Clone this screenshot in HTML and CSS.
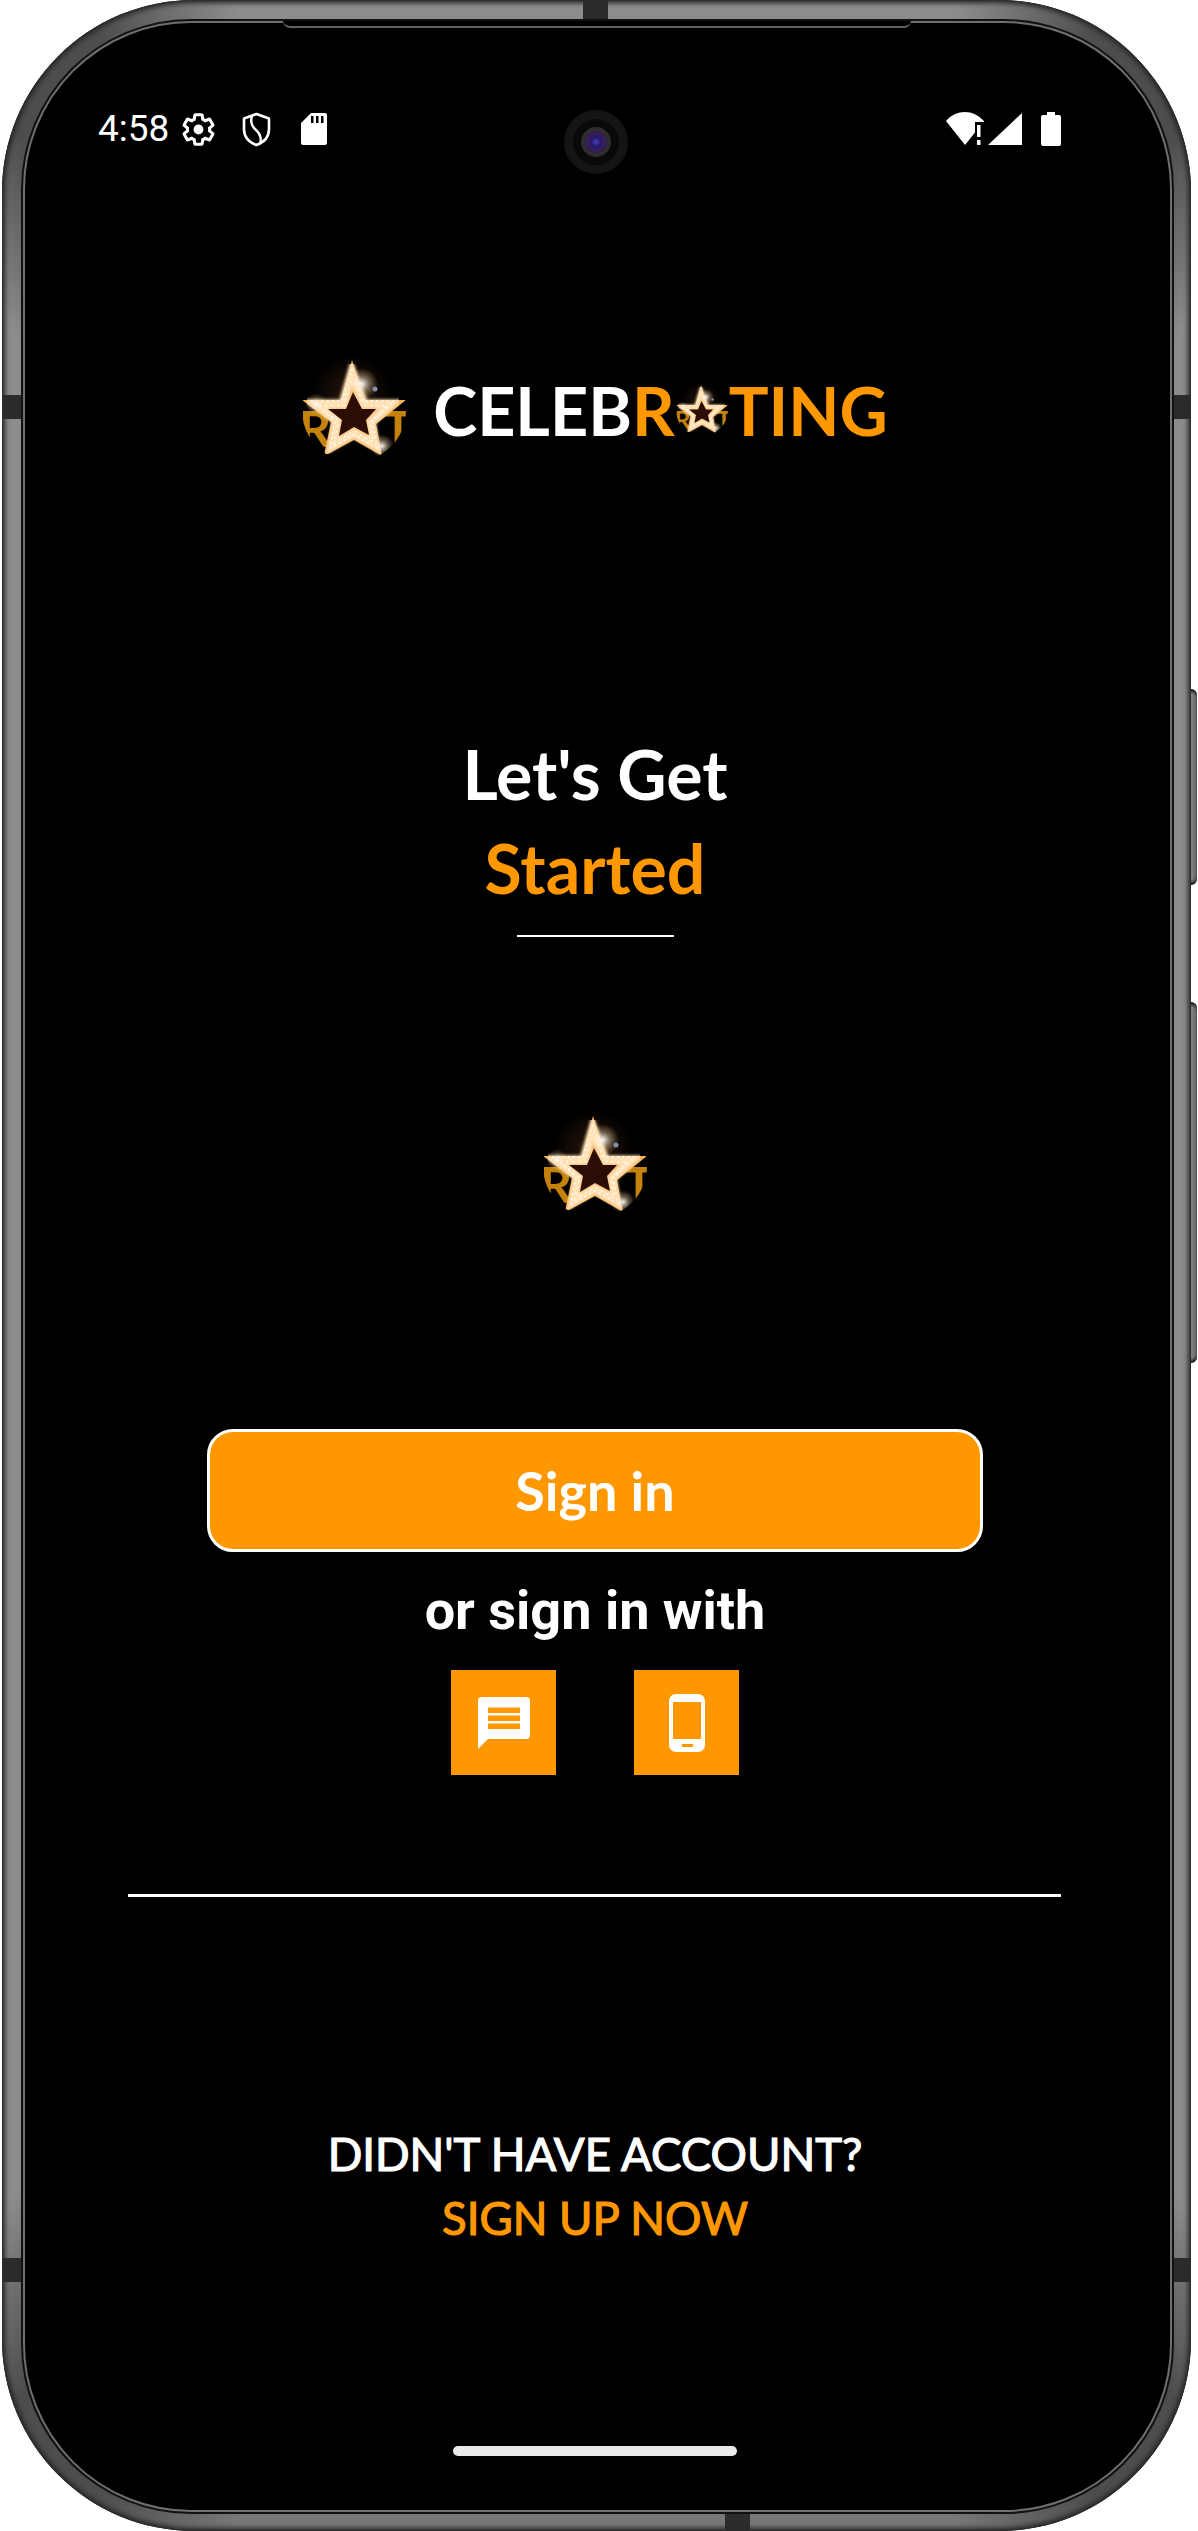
FILE: index.html
```html
<!DOCTYPE html>
<html lang="en">
<head>
  <meta charset="UTF-8" />
  <meta name="viewport" content="width=device-width, initial-scale=1.0" />
  <title>Celebrating</title>
  <link rel="stylesheet" href="styles.css">
</head>
<body>
  <!-- shared star logo -->
  <svg class="defs" width="0" height="0" aria-hidden="true">
    <defs>
      <clipPath id="logoClip"><circle cx="52" cy="52" r="52" /></clipPath>
      <radialGradient id="glare">
        <stop offset="0" stop-color="#fff" stop-opacity="0.95" />
        <stop offset="0.45" stop-color="#ffe9c8" stop-opacity="0.4" />
        <stop offset="1" stop-color="#ffc880" stop-opacity="0" />
      </radialGradient>
      <radialGradient id="halo">
        <stop offset="0" stop-color="#4a2a14" />
        <stop offset="1" stop-color="#000" />
      </radialGradient>
      <filter id="soft"><feGaussianBlur stdDeviation="1.6" /></filter>
      <symbol id="starLogo" viewBox="0 0 104 104">
        <g clip-path="url(#logoClip)">
          <circle cx="52" cy="52" r="52" fill="#000" />
          <circle cx="50" cy="36" r="40" fill="url(#halo)" opacity="0.6" />
          <text x="-3" y="89" class="logo-letter">R</text>
          <text x="81" y="89" class="logo-letter">T</text>
          <polygon points="50,2 63,42 104,42 74,66 80,98 52,82 22,98 29,64 0,42 39,42" fill="#f9b25c" />
          <polygon points="50,14 62,46 89,46 69,64 73,87 52,75 30,88 35,63 13,46 41,46" fill="none" stroke="#ffe2b8" stroke-width="9" filter="url(#soft)" />
          <polygon points="50,12 60,43 92,43 70,63 75,90 52,77 28,90 33,63 10,43 40,43" fill="none" stroke="#fffaf0" stroke-width="2.200" stroke-linecap="round" stroke-dasharray="0 5.300" />
          <polygon points="50,20 64,48 85,48 68,65 71,84 52,73 32,85 37,64 17,48 42,48" fill="none" stroke="#fffaf0" stroke-width="2" stroke-linecap="round" stroke-dasharray="0 6.100" />
          <polygon points="51,34 60,51 74,51 64,62 67,77 52,69 37,78 40,62 26,51 44,51" fill="#2b0d05" />
          <circle cx="60" cy="26" r="16" fill="url(#glare)" />
          <circle cx="73" cy="31" r="2.500" fill="#7f93b0" />
          <circle cx="80" cy="88" r="12" fill="url(#glare)" />
          <circle cx="14" cy="46" r="11" fill="url(#glare)" opacity="0.7" />
        </g>
      </symbol>
    </defs>
  </svg>

  <div class="phone">
    <span class="band band-top"></span>
    <span class="band band-bottom"></span>
    <span class="band band-left-a"></span>
    <span class="band band-left-b"></span>
    <span class="band band-right-a"></span>
    <span class="band band-right-b"></span>
    <span class="side-key key-upper"></span>
    <span class="side-key key-lower"></span>

    <div class="screen">
      <span class="notch"></span>
      <span class="camera"><span class="lens-ring"><span class="lens"></span></span></span>

      <div class="status">
        <span class="time">4:58</span>
        <svg class="ic-gear" viewBox="0 0 24 24"><path d="M19.14 12.94c.04-.3.06-.61.06-.94s-.02-.64-.07-.94l2.03-1.58c.18-.14.23-.41.12-.61l-1.92-3.32c-.12-.22-.37-.29-.59-.22l-2.39.96c-.5-.38-1.03-.7-1.62-.94L14.4 2.81c-.04-.24-.24-.41-.48-.41h-3.84c-.24 0-.43.17-.47.41l-.36 2.54c-.59.24-1.13.57-1.62.94l-2.39-.96c-.22-.08-.47 0-.59.22L2.74 8.87c-.12.21-.08.47.12.61l2.03 1.58c-.05.3-.09.63-.09.94s.02.64.07.94l-2.03 1.58c-.18.14-.23.41-.12.61l1.92 3.32c.12.22.37.29.59.22l2.39-.96c.5.38 1.03.7 1.62.94l.36 2.54c.05.24.24.41.48.41h3.84c.24 0 .44-.17.47-.41l.36-2.54c.59-.24 1.13-.56 1.62-.94l2.39.96c.22.08.47 0 .59-.22l1.92-3.32c.12-.22.07-.47-.12-.61l-2.01-1.58z" fill="none" stroke="#fff" stroke-width="2" /><circle cx="12" cy="12" r="3.200" fill="#fff" /></svg>
        <svg class="ic-shield" viewBox="0 0 29 35"><path d="M14.500 2 27 6.500V17c0 8-5.500 13.500-12.500 16C7.500 30.500 2 25 2 17V6.500z" fill="none" stroke="#fff" stroke-width="2.600" stroke-linejoin="round" /><path d="M10 4C8 10 9.500 14 14 18c4 3.500 5.500 7 4.500 13" fill="none" stroke="#fff" stroke-width="2.400" /></svg>
        <svg class="ic-sd" viewBox="0 0 26 32"><path d="M10 0h14a2 2 0 0 1 2 2v28a2 2 0 0 1-2 2H2a2 2 0 0 1-2-2V10zM10 3v7h2.500V3zm5 0v7h2.500V3zm5 0v7h2.500V3z" fill="#fff" fill-rule="evenodd" /></svg>
        <span class="status-gap"></span>
        <svg class="ic-wifi" viewBox="0 0 38 34"><path d="M0 9C5 3 12 0 19 0c7 0 13 3 19 9v1h-9v10.400L19 33z" fill="#fff" /><rect x="31" y="13" width="3.500" height="12" fill="#fff" /><rect x="31" y="28" width="3.500" height="5" fill="#fff" /></svg>
        <svg class="ic-signal" viewBox="0 0 34 32"><polygon points="34,0 34,32 0,32" fill="#fff" /></svg>
        <svg class="ic-battery" viewBox="0 0 20 34"><path d="M6 0h8v3h4a2 2 0 0 1 2 2v27a2 2 0 0 1-2 2H2a2 2 0 0 1-2-2V5a2 2 0 0 1 2-2h4z" fill="#fff" /></svg>
      </div>

      <div class="brand">
        <svg class="star"><use href="#starLogo" /></svg>
        <div class="brand-name">CELEB<span class="accent">R</span><svg class="star-small"><use href="#starLogo" /></svg><span class="accent">TING</span></div>
      </div>

      <h1 class="title">Let's Get<br><span class="accent">Started</span></h1>
      <div class="title-line"></div>

      <svg class="star middle-star"><use href="#starLogo" /></svg>

      <button class="signin">Sign in</button>
      <p class="or-text">or sign in with</p>

      <div class="alt-buttons">
        <button class="alt-btn">
          <svg class="ic-chat" viewBox="0 0 52 52"><path d="M4 0h44a4 4 0 0 1 4 4v34a4 4 0 0 1-4 4H10L0 52V4a4 4 0 0 1 4-4zm6 10.500V16h32v-5.500zm0 8V24h32v-5.500zm0 8V32h32v-5.500z" fill="#fff" fill-rule="evenodd" /></svg>
        </button>
        <button class="alt-btn">
          <svg class="ic-mobile" viewBox="0 0 36 58"><path d="M7 0h22a7 7 0 0 1 7 7v44a7 7 0 0 1-7 7H7a7 7 0 0 1-7-7V7a7 7 0 0 1 7-7zM4 8v37h28V8zm9 42v3h11v-3z" fill="#fff" fill-rule="evenodd" /></svg>
        </button>
      </div>

      <div class="divider"></div>

      <p class="no-account">DIDN'T HAVE ACCOUNT?</p>
      <p class="signup accent">SIGN UP NOW</p>

      <div class="home-pill"></div>
    </div>
  </div>
</body>
</html>
```

FILE: styles.css
```css
body {
  margin: 0;
  background: #ffffff;
  font-family: "Lato", sans-serif;
}

.defs {
  position: absolute;
}

.logo-letter {
  font-family: "Lato", sans-serif;
  font-size: 50px;
  font-weight: 700;
  fill: #c4820c;
}

.phone {
  position: relative;
  box-sizing: border-box;
  width: 1189px;
  height: 2531px;
  margin-left: 2px;
  padding: 21px 19px 19px 21px;
  border-radius: 192px;
  background: conic-gradient(
    #8c8c8c 0deg 16deg,
    #4d4d4d 22deg 27deg,
    #8c8c8c 32deg 148deg,
    #4d4d4d 153deg 158deg,
    #777777 164deg 196deg,
    #4d4d4d 202deg 207deg,
    #8c8c8c 212deg 328deg,
    #4d4d4d 333deg 338deg,
    #8c8c8c 344deg 360deg
  );
  box-shadow: inset 0 0 0 1px #2e2e2e, inset 0 0 5px 3px #262626;
}

.band {
  position: absolute;
  background: #2b2b2b;
}

.band-top {
  top: 0;
  left: 581px;
  width: 25px;
  height: 21px;
}

.band-bottom {
  bottom: 0;
  left: 723px;
  width: 25px;
  height: 20px;
}

.band-left-a,
.band-left-b,
.band-right-a,
.band-right-b {
  width: 21px;
  height: 24px;
}

.band-left-a {
  top: 395px;
  left: 0;
}

.band-left-b {
  top: 2258px;
  left: 0;
}

.band-right-a {
  top: 395px;
  right: 0;
}

.band-right-b {
  top: 2258px;
  right: 0;
}

.side-key {
  position: absolute;
  left: 1189px;
  width: 6px;
  border-radius: 0 6px 6px 0;
  background: linear-gradient(90deg, #8a8a8a, #5c5c5c);
  box-shadow: inset 0 5px 3px -2px #222222, inset 0 -5px 3px -2px #222222;
}

.key-upper {
  top: 689px;
  height: 196px;
}

.key-lower {
  top: 1002px;
  height: 361px;
}

.screen {
  position: relative;
  box-sizing: border-box;
  height: 100%;
  padding-right: 5px;
  display: flex;
  flex-direction: column;
  align-items: center;
  border: 2px solid #6f6f6f;
  border-radius: 168px;
  background: #000000;
  box-shadow: 0 0 0 2px #111111;
  color: #ffffff;
}

.notch {
  position: absolute;
  top: -2px;
  left: 258px;
  width: 628px;
  height: 5px;
  background: #000000;
  border-bottom: 2px solid #636363;
  border-radius: 0 0 8px 8px;
}

.camera {
  position: absolute;
  top: 87px;
  left: 539px;
  width: 64px;
  height: 64px;
  display: flex;
  align-items: center;
  justify-content: center;
  border-radius: 50%;
  background: #141414;
}

.lens-ring {
  width: 46px;
  height: 46px;
  display: flex;
  align-items: center;
  justify-content: center;
  border-radius: 50%;
  background: #090909;
}

.lens {
  box-sizing: border-box;
  width: 30px;
  height: 30px;
  border-radius: 50%;
  border: 4px solid #2e2e30;
  background: radial-gradient(circle at 50% 50%, #4f3bc0 0, #221a66 30%, #3a1f5a 60%, #07070f 100%);
}

.status {
  box-sizing: border-box;
  align-self: stretch;
  height: 36px;
  margin-top: 88px;
  padding: 0 104px 0 73px;
  display: flex;
  align-items: center;
}

.time {
  font-family: "Roboto", sans-serif;
  font-size: 37px;
  line-height: 36px;
  color: #ffffff;
}

.ic-gear {
  width: 37px;
  height: 37px;
  margin-left: 11px;
}

.ic-shield {
  width: 29px;
  height: 35px;
  margin-left: 25px;
}

.ic-sd {
  width: 26px;
  height: 32px;
  margin-left: 30px;
}

.status-gap {
  flex: 1;
}

.ic-wifi {
  width: 38px;
  height: 34px;
}

.ic-signal {
  width: 34px;
  height: 32px;
  margin-left: 4px;
}

.ic-battery {
  width: 20px;
  height: 34px;
  margin-left: 19px;
}

.brand {
  height: 104px;
  margin-top: 211px;
  display: flex;
  align-items: center;
  gap: 27px;
}

.star {
  display: block;
  width: 104px;
  height: 104px;
}

.brand-name {
  display: flex;
  align-items: center;
  font-size: 66.5px;
  font-weight: 700;
  line-height: 64px;
}

.star-small {
  width: 52px;
  height: 52px;
  margin: 0 1px;
}

.accent {
  color: #ff9800;
}

.title {
  margin: 265px 0 0;
  font-size: 68px;
  font-weight: 700;
  line-height: 94px;
  text-align: center;
}

.title-line {
  width: 157px;
  height: 2px;
  margin-top: 20px;
  background: #ffffff;
}

.middle-star {
  margin-top: 177px;
}

.signin {
  box-sizing: border-box;
  width: 776px;
  height: 123px;
  margin-top: 211px;
  border: 3px solid #ffffff;
  border-radius: 26px;
  background: #ff9800;
  color: #ffffff;
  font-family: "Lato", sans-serif;
  font-size: 54px;
  font-weight: 700;
}

.or-text {
  margin: 29px 0 0;
  font-family: "Roboto", sans-serif;
  font-size: 54px;
  font-weight: 700;
  line-height: 60px;
}

.alt-buttons {
  margin-top: 29px;
  display: flex;
  gap: 78px;
}

.alt-btn {
  width: 105px;
  height: 105px;
  padding: 0;
  display: flex;
  align-items: center;
  justify-content: center;
  border: none;
  background: #ff9800;
}

.ic-chat {
  width: 52px;
  height: 52px;
}

.ic-mobile {
  width: 36px;
  height: 58px;
}

.divider {
  width: 933px;
  height: 3px;
  margin-top: 119px;
  margin-right: 2px;
  background: #ffffff;
}

.no-account,
.signup {
  margin: 0;
  font-size: 45.5px;
  font-weight: 400;
  line-height: 64px;
  -webkit-text-stroke: 1.2px currentColor;
}

.no-account {
  margin-top: 225px;
}

.home-pill {
  width: 284px;
  height: 10px;
  margin-top: 196px;
  border-radius: 5px;
  background: #eaeaea;
}
```
